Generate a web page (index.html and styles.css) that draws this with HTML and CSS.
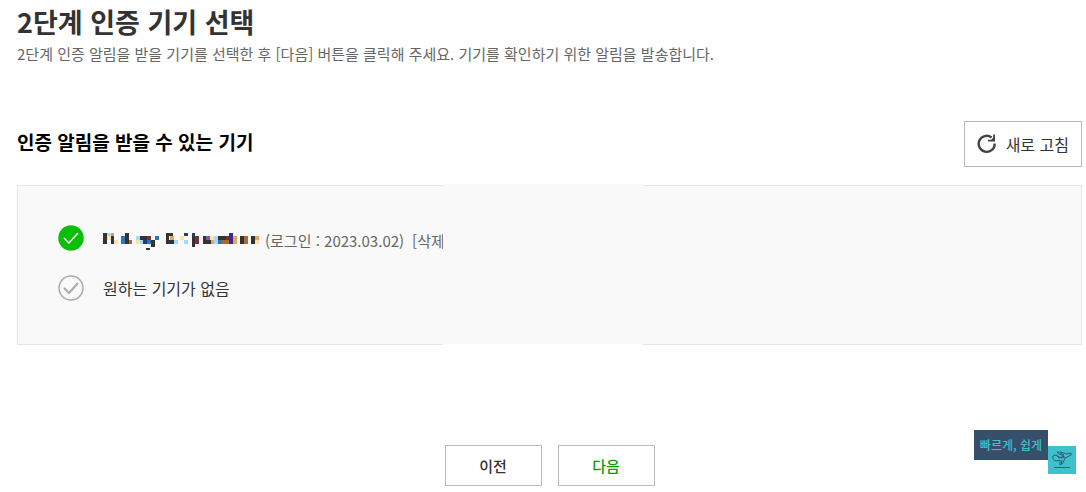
FILE: index.html
```html
<!DOCTYPE html>
<html lang="ko">

<head>
    <meta charset="UTF-8">
    <meta name="viewport" content="width=device-width, initial-scale=1.0">
    <title>2단계 인증 기기 선택</title>
    <link rel="stylesheet" href="styles.css">
</head>

<body>
    <main class="container">
        <header>
            <h1>2단계 인증 기기 선택</h1>
            <p class="description">2단계 인증 알림을 받을 기기를 선택한 후 [다음] 버튼을 클릭해 주세요. 기기를 확인하기 위한 알림을 발송합니다.</p>
        </header>

        <form>
            <div class="section-head">
                <h2 id="device-title">인증 알림을 받을 수 있는 기기</h2>
                <button type="button" class="btn-refresh">
                    <svg width="20" height="20" viewBox="0 0 20 20" aria-hidden="true">
                        <path d="M17.700 9.500A8 8 0 1 1 14.600 3.500" fill="none" stroke="#444" stroke-width="2.400" />
                        <path d="M18 0.500v7h-7l0-1.800h3.200l2-2V0.500z" fill="#444" />
                    </svg>
                    <span>새로 고침</span>
                </button>
            </div>

            <!-- Device list -->
            <div class="device-list" role="radiogroup" aria-labelledby="device-title">
                <div class="device">
                    <input type="radio" name="device" id="device-1" checked>
                    <label for="device-1">
                        <svg class="check" width="26" height="26" viewBox="0 0 26 26" aria-hidden="true">
                            <circle cx="13" cy="13" r="12" />
                            <path d="M6 13l5 5 9-10" />
                        </svg>
                        <!-- masked device name -->
                        <svg class="masked" width="156" height="18" viewBox="4 5 156 18" role="img" aria-label="기기 이름" shape-rendering="crispEdges">
                            <path fill="#333" d="M4 5h4v11h-4zM12 8h3v8h-3zM26 5h4v11h-4zM41 8h7v4h-7zM52 12h4v7h-4zM47 20h4v2h-4zM67 5h7v3h-4v4h5v4h-8zM93 8h3v11h-3zM104 8h4v8h-4zM108 12h4v4h-4zM141 8h4v8h-4zM152 8h4v8h-4zM119 8h8v4h-8z" />
                            <path fill="#ffe1aa" d="M8 8h4v4h-4zM15 12h4v4h-4zM37 12h4v4h-4zM81 8h4v4h-4zM111 8h4v4h-4zM156 12h4v4h-4z" />
                            <path fill="#a2dcfa" d="M37 8h4v4h-4zM41 12h3v4h-3zM75 12h4v4h-4zM85 12h4v4h-4zM115 8h4v4h-4zM115 12h4v4h-4z" />
                            <path fill="#b8d5e9" d="M8 5h4v3h-4z" />
                            <path fill="#c79d8c" d="M12 5h3v3h-3z" />
                            <path fill="#2b75b8" d="M22 8h4v8h-4zM56 8h4v4h-4zM48 12h4v4h-4zM119 12h4v4h-4z" />
                            <path fill="#ac6930" d="M30 12h3v4h-3zM123 12h7v4h-7zM145 8h4v8h-4z" />
                            <path fill="#273b78" d="M44 12h4v4h-4zM85 5h4v3h-4zM93 5h3v3h-3z" />
                            <path fill="#7c3033" d="M48 8h4v4h-4zM96 8h4v8h-4zM127 8h3v4h-3z" />
                            <path fill="#e3a763" d="M71 8h4v4h-4zM112 12h3v4h-3zM134 8h4v8h-4zM156 8h4v4h-4z" />
                            <path fill="#302f91" d="M130 5h4v11h-4z" />
                            <path fill="#78609c" d="M107 8h4v4h-4z" />
                        </svg>
                        <span class="login-date">(로그인 : 2023.03.02)</span>
                    </label>
                    <a href="#" class="delete">[삭제]</a>
                </div>
                <div class="device">
                    <input type="radio" name="device" id="device-none">
                    <label for="device-none">
                        <svg class="check" width="26" height="26" viewBox="0 0 26 26" aria-hidden="true">
                            <circle cx="13" cy="13" r="12" />
                            <path d="M6 13l5 5 9-10" />
                        </svg>
                        <span>원하는 기기가 없음</span>
                    </label>
                </div>
                <div class="cover"></div>
            </div>

            <div class="buttons">
                <button type="button">이전</button>
                <button type="submit" class="btn-next">다음</button>
            </div>
        </form>
    </main>

    <!-- Watermark -->
    <div class="watermark">
        <span class="watermark-text">빠르게, 쉽게</span>
        <svg width="28" height="28" viewBox="0 0 28 28" aria-hidden="true">
            <rect width="28" height="28" fill="#3fc1cb" />
            <g fill="none" stroke="#2c6079" stroke-width="1" stroke-linejoin="round">
                <path d="M5 10l3-1 3 3 5-2-5-2-2-2 3 0 7 2 3-1q2 0 1 2l-6 3-2 5-3 2 0-5-4 1q-4-1-3-5z" />
                <path d="M8 9l5 3 4-1M12 7l4 2M14 14l-1 5" />
                <path d="M6 21.500h16" />
            </g>
        </svg>
    </div>
</body>

</html>
```

FILE: styles.css
```css
* {
    margin: 0;
    padding: 0;
    box-sizing: border-box;
}

body {
    position: relative;
    font-family: "Noto Sans CJK KR", sans-serif;
    font-size: 16px;
    line-height: 24px;
    color: #333;
    background-color: #fff;
}

.container {
    padding: 2px 4px 6px 17px;
}

h1 {
    font-size: 27px;
    line-height: 40px;
}

.description {
    font-size: 15px;
    color: #666;
}

/* Section title and refresh button */
.section-head {
    display: flex;
    justify-content: space-between;
    align-items: center;
    margin-top: 55px;
    margin-bottom: 18px;
}

h2 {
    font-size: 19px;
    line-height: 28px;
    color: #000;
    padding-bottom: 4px;
}

button {
    font-family: inherit;
    color: #333;
    background-color: #fff;
    border: 1px solid #bbb;
    cursor: pointer;
}

.btn-refresh {
    display: flex;
    align-items: center;
    gap: 9px;
    height: 46px;
    padding: 0 12px;
    font-size: 16px;
}

/* Device list */
.device-list {
    position: relative;
    display: flex;
    flex-direction: column;
    gap: 24px;
    padding: 39px 40px 43px;
    background-color: #f9f9f9;
    border: 1px solid #e5e5e5;
}

.device,
.device label {
    display: flex;
    align-items: center;
    height: 26px;
}

.device label {
    cursor: pointer;
}

.device input {
    appearance: none;
    width: 0;
    height: 26px;
}

.check {
    margin-right: 19px;
}

.check circle {
    fill: none;
    stroke: #aaa;
    stroke-width: 1.5;
}

.check path {
    fill: none;
    stroke: #aaa;
    stroke-width: 2;
}

input:checked + label .check circle {
    fill: #0abf0a;
    stroke: #0abf0a;
}

input:checked + label .check path {
    stroke: #fff;
    stroke-width: 1.5;
}

.masked {
    margin-right: 6px;
    margin-top: 8px;
}

.login-date,
.delete {
    padding-top: 5px;
    font-size: 15px;
    color: #666;
}

.delete {
    margin-left: 8px;
    text-decoration: none;
}

.cover {
    position: absolute;
    top: -2px;
    bottom: -1px;
    left: 40%;
    width: 200px;
    background-color: #f9f9f9;
    border-bottom: 1px solid #fff;
}

/* Bottom buttons */
.buttons {
    display: flex;
    justify-content: center;
    gap: 16px;
    margin-top: 100px;
}

.buttons button {
    width: 97px;
    height: 41px;
    font-size: 15px;
    font-weight: 500;
}

.buttons .btn-next {
    color: #0a9f0a;
}

/* Watermark */
.watermark {
    position: absolute;
    right: 10px;
    bottom: 18px;
    display: flex;
    align-items: flex-end;
}

.watermark-text {
    padding: 3px 6px;
    margin-bottom: 14px;
    font-size: 12px;
    font-weight: 500;
    color: #3fc1cb;
    background-color: #364f6b;
}
```
